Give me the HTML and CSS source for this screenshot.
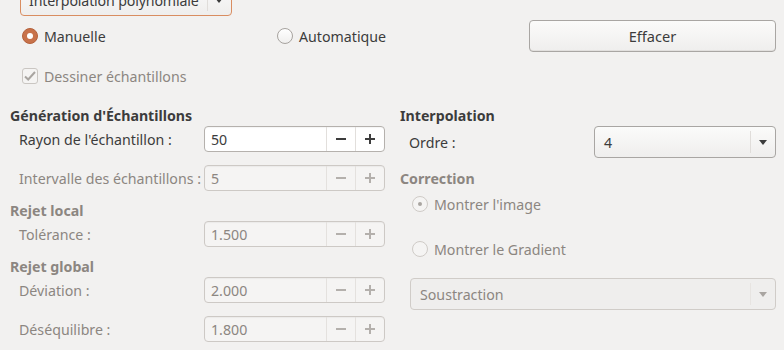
FILE: index.html
```html
<!DOCTYPE html>
<html lang="fr">
<head>
<meta charset="utf-8">
<link rel="stylesheet" href="styles.css">
</head>
<body>
<div class="dialog">
  <div class="top-combo">
    <span class="combo-text">Interpolation polynomiale</span>
    <span class="combo-sep"></span>
    <svg class="arrow" width="8" height="5" viewBox="0 0 8 5"><path d="M0 0h8L4 5z" fill="#3c3c3c"/></svg>
  </div>

  <div class="mode-row">
    <label class="radio"><span class="rb rb-on"></span>Manuelle</label>
    <label class="radio"><span class="rb"></span>Automatique</label>
    <button class="btn">Effacer</button>
  </div>

  <div class="check-row disabled">
    <span class="cb"><svg width="12" height="10" viewBox="0 0 12 10"><path d="M1 5.5l3.2 3L11 1" fill="none" stroke="#a9a5a1" stroke-width="2"/></svg></span>
    Dessiner échantillons
  </div>

  <div class="columns">
    <div class="col col-left">
      <div class="heading">Génération d'Échantillons</div>
      <div class="field">
        <span class="label">Rayon de l'échantillon :</span>
        <div class="spin">
          <span class="spin-val">50</span>
          <span class="spin-btn"><svg width="10" height="10" viewBox="0 0 10 10"><path d="M0 4h10v2H0z" fill="#3c3c3c"/></svg></span>
          <span class="spin-btn"><svg width="10" height="10" viewBox="0 0 10 10"><path d="M0 4h10v2H0zM4 0h2v10H4z" fill="#3c3c3c"/></svg></span>
        </div>
      </div>
      <div class="field disabled gap13">
        <span class="label">Intervalle des échantillons :</span>
        <div class="spin">
          <span class="spin-val">5</span>
          <span class="spin-btn"><svg width="10" height="10" viewBox="0 0 10 10"><path d="M0 4h10v2H0z" fill="#b4b0ac"/></svg></span>
          <span class="spin-btn"><svg width="10" height="10" viewBox="0 0 10 10"><path d="M0 4h10v2H0zM4 0h2v10H4z" fill="#b4b0ac"/></svg></span>
        </div>
      </div>
      <div class="heading disabled h-local">Rejet local</div>
      <div class="field disabled">
        <span class="label">Tolérance :</span>
        <div class="spin">
          <span class="spin-val">1.500</span>
          <span class="spin-btn"><svg width="10" height="10" viewBox="0 0 10 10"><path d="M0 4h10v2H0z" fill="#b4b0ac"/></svg></span>
          <span class="spin-btn"><svg width="10" height="10" viewBox="0 0 10 10"><path d="M0 4h10v2H0zM4 0h2v10H4z" fill="#b4b0ac"/></svg></span>
        </div>
      </div>
      <div class="heading disabled h-global">Rejet global</div>
      <div class="field disabled">
        <span class="label">Déviation :</span>
        <div class="spin">
          <span class="spin-val">2.000</span>
          <span class="spin-btn"><svg width="10" height="10" viewBox="0 0 10 10"><path d="M0 4h10v2H0z" fill="#b4b0ac"/></svg></span>
          <span class="spin-btn"><svg width="10" height="10" viewBox="0 0 10 10"><path d="M0 4h10v2H0zM4 0h2v10H4z" fill="#b4b0ac"/></svg></span>
        </div>
      </div>
      <div class="field disabled gap13">
        <span class="label">Déséquilibre :</span>
        <div class="spin">
          <span class="spin-val">1.800</span>
          <span class="spin-btn"><svg width="10" height="10" viewBox="0 0 10 10"><path d="M0 4h10v2H0z" fill="#b4b0ac"/></svg></span>
          <span class="spin-btn"><svg width="10" height="10" viewBox="0 0 10 10"><path d="M0 4h10v2H0zM4 0h2v10H4z" fill="#b4b0ac"/></svg></span>
        </div>
      </div>
    </div>

    <div class="col col-right">
      <div class="heading">Interpolation</div>
      <div class="field field-combo">
        <span class="label">Ordre :</span>
        <div class="combo">
          <span class="combo-text">4</span>
          <span class="combo-sep"></span>
          <svg class="arrow" width="8" height="5" viewBox="0 0 8 5"><path d="M0 0h8L4 5z" fill="#3c3c3c"/></svg>
        </div>
      </div>
      <div class="heading disabled h-corr">Correction</div>
      <label class="radio disabled r-img"><span class="rb rb-dis-on"></span>Montrer l'image</label>
      <label class="radio disabled r-grad"><span class="rb rb-dis"></span>Montrer le Gradient</label>
      <div class="combo combo-wide disabled">
        <span class="combo-text">Soustraction</span>
        <span class="combo-sep"></span>
        <svg class="arrow" width="8" height="5" viewBox="0 0 8 5"><path d="M0 0h8L4 5z" fill="#a9a5a1"/></svg>
      </div>
    </div>
  </div>
</div>
</body>
</html>
```

FILE: styles.css
```css
html, body {
  margin: 0;
  padding: 0;
  background: #f2f1f0;
}
body {
  font-family: "Noto Sans", "Open Sans", sans-serif;
  font-size: 14.2px;
  color: #3c3c3c;
  width: 784px;
  height: 350px;
  overflow: hidden;
}
.dialog {
  padding-left: 10px;
}
.disabled { color: #8c8681; }

/* top combo (focused, cut off) */
.top-combo {
  margin-top: -16px;
  margin-left: 10px;
  width: 212px;
  height: 32px;
  box-sizing: border-box;
  border: 1px solid #d98d61;
  border-radius: 4px;
  background: linear-gradient(#fafafa, #efeeed);
  display: flex;
  align-items: center;
  padding-left: 8px;
}
.top-combo .combo-text { letter-spacing: -0.15px; }
.combo-text { flex: 1; white-space: nowrap; }
.combo-sep {
  width: 1px;
  align-self: stretch;
  margin: 4px 0;
  background: #e0ddda;
}
.arrow { margin: 0 8px 0 7px; }

/* mode row */
.mode-row {
  margin-top: 4px;
  margin-left: 12px;
  display: grid;
  grid-template-columns: 255px 252px 247px;
  height: 32px;
  align-items: center;
}
.radio {
  display: flex;
  align-items: center;
  gap: 6px;
  white-space: nowrap;
}
.rb {
  width: 16px;
  height: 16px;
  box-sizing: border-box;
  border-radius: 50%;
  border: 1px solid #a7a39f;
  background: linear-gradient(#ffffff, #f0efee);
  flex: none;
  position: relative;
}
.rb-on {
  border-color: #b5613b;
  background: #c8724a;
}
.rb-on::after {
  content: "";
  position: absolute;
  left: 4px; top: 4px;
  width: 6px; height: 6px;
  border-radius: 50%;
  background: #fff;
}
.rb-dis, .rb-dis-on {
  border-color: #cfcbc7;
  background: #f5f4f3;
}
.rb-dis-on::after {
  content: "";
  position: absolute;
  left: 5px; top: 5px;
  width: 4px; height: 4px;
  border-radius: 50%;
  background: #a9a5a1;
}
.btn {
  font: inherit;
  font-size: 14.6px;
  color: #3c3c3c;
  height: 32px;
  border: 1px solid #a9a6a3;
  border-radius: 4px;
  background: linear-gradient(#fbfbfa, #efeeed);
  box-shadow: inset 0 -1px 0 #e2e0de;
  padding: 0;
}

/* checkbox row */
.check-row {
  margin-top: 16px;
  margin-left: 12px;
  height: 16px;
  display: flex;
  align-items: center;
  gap: 6px;
}
.cb {
  width: 16px; height: 16px;
  box-sizing: border-box;
  border: 1px solid #cac6c2;
  border-radius: 3px;
  background: #f5f4f3;
  display: flex;
  align-items: center;
  justify-content: center;
}

/* columns */
.columns {
  margin-top: 22px;
  display: grid;
  grid-template-columns: 375px 376px;
  column-gap: 15px;
}
.col { display: flex; flex-direction: column; }
.heading {
  font-weight: bold;
  height: 20px;
  line-height: 20px;
}
.field {
  display: grid;
  grid-template-columns: 194px 181px;
  height: 26px;
  align-items: center;
}
.field .label { padding-left: 9px; white-space: nowrap; }
.gap13 { margin-top: 13px; }
.h-local { margin-top: 10px; }
.h-global { margin-top: 10px; }

.spin {
  height: 26px;
  box-sizing: border-box;
  border: 1px solid #b5b1ad;
  border-radius: 4px;
  background: #ffffff;
  display: flex;
  align-items: stretch;
  box-shadow: inset 0 1px 1px rgba(0,0,0,0.04);
}
.disabled .spin {
  border-color: #cdc9c5;
  background: #f5f4f3;
}
.spin-val {
  flex: 1;
  display: flex;
  align-items: center;
  padding-left: 6px;
}
.spin-btn {
  width: 28px;
  display: flex;
  align-items: center;
  justify-content: center;
  border-left: 1px solid #e2dfdc;
}
.disabled .spin-btn { border-left-color: #e4e1de; }

.field-combo {
  grid-template-columns: 194px 182px;
  height: 32px;
}
.combo {
  height: 32px;
  box-sizing: border-box;
  border: 1px solid #a9a6a3;
  border-radius: 4px;
  background: linear-gradient(#fbfbfa, #efeeed);
  display: flex;
  align-items: center;
  padding-left: 9px;
}
.combo .arrow { margin: 0 8px 0 8px; }
.h-corr { margin-top: 11px; }
.r-img { margin-top: 3px; height: 24px; margin-left: 12px; }
.r-grad { margin-top: 21px; height: 24px; margin-left: 12px; }
.combo-wide {
  margin-top: 17px;
  margin-left: 10px;
  border-color: #d0ccc8;
  background: #efeeed;
}
.combo-wide .combo-sep { background: #e7e4e1; }
```
